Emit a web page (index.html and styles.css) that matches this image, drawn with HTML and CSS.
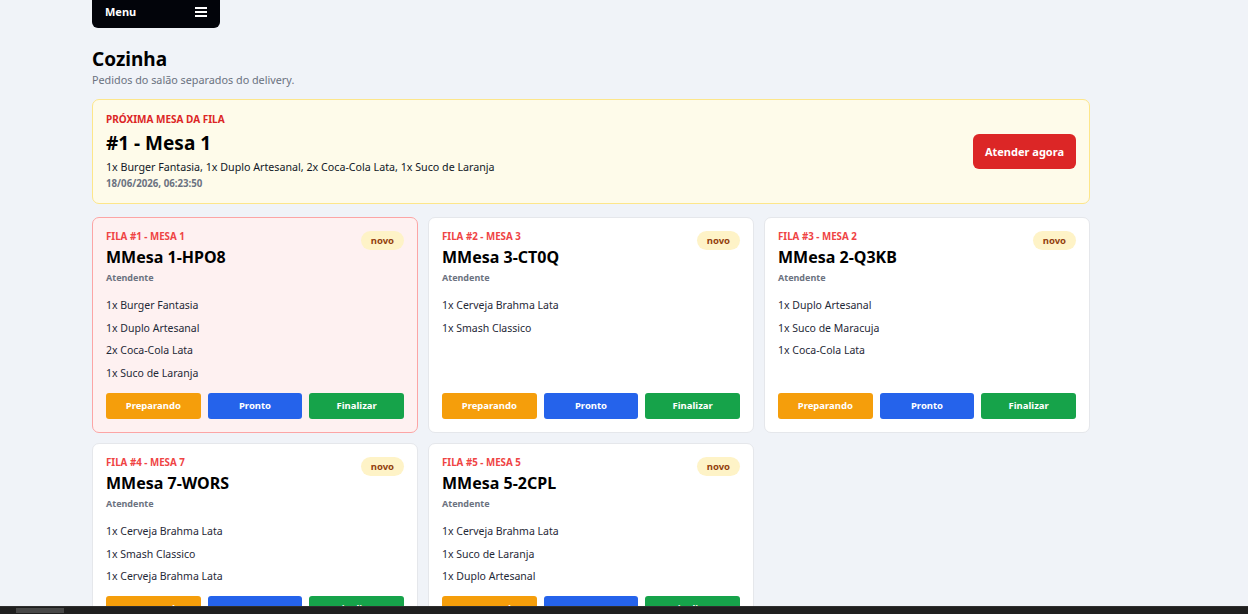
FILE: index.html
```html
<!DOCTYPE html>
<html lang="pt-BR">
	<head>
		<meta charset="UTF-8" />
		<meta name="viewport" content="width=device-width, initial-scale=1.0" />
		<title>Cozinha</title>
		<link rel="stylesheet" href="styles.css">
	</head>
	<body>
		<main class="page">
			<div class="menu-bar">
				<span>Menu</span>
				<svg class="menu-icon" viewBox="0 0 12 12" fill="currentColor">
					<rect x="0" y="1" width="12" height="2"></rect>
					<rect x="0" y="5" width="12" height="2"></rect>
					<rect x="0" y="9" width="12" height="2"></rect>
				</svg>
			</div>

			<h1>Cozinha</h1>
			<p class="subtitle">Pedidos do salão separados do delivery.</p>

			<section class="next-box">
				<div class="next-info">
					<div class="next-label">PRÓXIMA MESA DA FILA</div>
					<h2>#1 - Mesa 1</h2>
					<div class="next-items">1x Burger Fantasia, 1x Duplo Artesanal, 2x Coca-Cola Lata, 1x Suco de Laranja</div>
					<div class="next-date">18/06/2026, 06:23:50</div>
				</div>
				<button class="btn-attend">Atender agora</button>
			</section>

			<section class="orders">
				<div class="order-card first">
					<div class="card-top">
						<div>
							<div class="queue-label">FILA #1 - MESA 1</div>
							<h3>MMesa 1-HPO8</h3>
						</div>
						<span class="badge">novo</span>
					</div>
					<div class="waiter">Atendente</div>
					<ul class="items">
						<li>1x Burger Fantasia</li>
						<li>1x Duplo Artesanal</li>
						<li>2x Coca-Cola Lata</li>
						<li>1x Suco de Laranja</li>
					</ul>
					<div class="actions">
						<button class="btn-prep">Preparando</button>
						<button class="btn-ready">Pronto</button>
						<button class="btn-done">Finalizar</button>
					</div>
				</div>

				<div class="order-card">
					<div class="card-top">
						<div>
							<div class="queue-label">FILA #2 - MESA 3</div>
							<h3>MMesa 3-CT0Q</h3>
						</div>
						<span class="badge">novo</span>
					</div>
					<div class="waiter">Atendente</div>
					<ul class="items">
						<li>1x Cerveja Brahma Lata</li>
						<li>1x Smash Classico</li>
					</ul>
					<div class="actions">
						<button class="btn-prep">Preparando</button>
						<button class="btn-ready">Pronto</button>
						<button class="btn-done">Finalizar</button>
					</div>
				</div>

				<div class="order-card">
					<div class="card-top">
						<div>
							<div class="queue-label">FILA #3 - MESA 2</div>
							<h3>MMesa 2-Q3KB</h3>
						</div>
						<span class="badge">novo</span>
					</div>
					<div class="waiter">Atendente</div>
					<ul class="items">
						<li>1x Duplo Artesanal</li>
						<li>1x Suco de Maracuja</li>
						<li>1x Coca-Cola Lata</li>
					</ul>
					<div class="actions">
						<button class="btn-prep">Preparando</button>
						<button class="btn-ready">Pronto</button>
						<button class="btn-done">Finalizar</button>
					</div>
				</div>

				<div class="order-card">
					<div class="card-top">
						<div>
							<div class="queue-label">FILA #4 - MESA 7</div>
							<h3>MMesa 7-WORS</h3>
						</div>
						<span class="badge">novo</span>
					</div>
					<div class="waiter">Atendente</div>
					<ul class="items">
						<li>1x Cerveja Brahma Lata</li>
						<li>1x Smash Classico</li>
						<li>1x Cerveja Brahma Lata</li>
					</ul>
					<div class="actions">
						<button class="btn-prep">Preparando</button>
						<button class="btn-ready">Pronto</button>
						<button class="btn-done">Finalizar</button>
					</div>
				</div>

				<div class="order-card">
					<div class="card-top">
						<div>
							<div class="queue-label">FILA #5 - MESA 5</div>
							<h3>MMesa 5-2CPL</h3>
						</div>
						<span class="badge">novo</span>
					</div>
					<div class="waiter">Atendente</div>
					<ul class="items">
						<li>1x Cerveja Brahma Lata</li>
						<li>1x Suco de Laranja</li>
						<li>1x Duplo Artesanal</li>
					</ul>
					<div class="actions">
						<button class="btn-prep">Preparando</button>
						<button class="btn-ready">Pronto</button>
						<button class="btn-done">Finalizar</button>
					</div>
				</div>
			</section>
		</main>
		<div class="scrollbar"><div class="scroll-thumb"></div></div>
	</body>
</html>
```

FILE: styles.css
```css
:root {
	--bg-color: #f0f3f8;
	--text-color: #111827;
	--muted: #6b7280;
	--red: #dc2626;
	--label-red: #ef4444;
	--border: #e5e7eb;
}
body {
	font-family: 'Noto Sans', sans-serif;
	margin: 0;
	background-color: var(--bg-color);
	color: var(--text-color);
	overflow: hidden;
	height: 614px;
}
.page {
	width: 998px;
	margin-left: 92px;
}
.menu-bar {
	display: flex;
	justify-content: space-between;
	align-items: center;
	width: 128px;
	height: 28px;
	box-sizing: border-box;
	padding: 0 13px 5px 13px;
	background-color: #02040a;
	color: #fff;
	border-radius: 0 0 6px 6px;
	font-size: 11px;
	font-weight: 700;
}
.menu-icon {
	width: 12px;
	height: 12px;
}
h1 {
	margin: 20px 0 0;
	font-size: 19px;
	line-height: 22px;
	font-weight: 700;
	color: #000;
}
.subtitle {
	margin: 2px 0 0;
	font-size: 10.8px;
	color: var(--muted);
}
.next-box {
	display: flex;
	align-items: center;
	justify-content: space-between;
	margin-top: 12px;
	padding: 12px 13px 13px;
	background-color: #fefbea;
	border: 1px solid #fde68a;
	border-radius: 7px;
}
.next-label {
	font-size: 10px;
	font-weight: 700;
	color: var(--red);
}
h2 {
	margin: 5px 0 3px;
	font-size: 19px;
	line-height: 24px;
	color: #000;
}
.next-items {
	font-size: 10.7px;
	line-height: 19px;
}
.next-date {
	font-size: 9.7px;
	font-weight: 700;
	color: var(--muted);
}
.btn-attend {
	background-color: var(--red);
	color: #fff;
	border: none;
	border-radius: 6px;
	padding: 0 12px;
	height: 35px;
	font-family: inherit;
	font-size: 11px;
	font-weight: 700;
	cursor: pointer;
}
.orders {
	display: grid;
	grid-template-columns: repeat(3, 1fr);
	gap: 10px;
	margin-top: 13px;
}
.order-card {
	display: flex;
	flex-direction: column;
	padding: 12px 13px 13px;
	background-color: #fff;
	border: 1px solid var(--border);
	border-radius: 7px;
}
.order-card.first {
	background-color: #fef1f1;
	border-color: #fca5a5;
}
.card-top {
	display: flex;
	justify-content: space-between;
	align-items: flex-start;
}
.queue-label {
	font-size: 9.75px;
	font-weight: 700;
	color: var(--label-red);
}
h3 {
	margin: 3px 0 0;
	font-size: 16px;
	line-height: 22px;
	color: #000;
}
.badge {
	margin-top: 1px;
	padding: 2px 10px;
	background-color: #fef3c7;
	color: #92400e;
	border-radius: 999px;
	font-size: 9.5px;
	font-weight: 700;
	line-height: 15px;
}
.waiter {
	margin-top: 3px;
	font-size: 9px;
	font-weight: 700;
	color: var(--muted);
}
.items {
	list-style: none;
	margin: 10px 0 0;
	padding: 0;
	font-size: 10.5px;
	color: #1f2937;
}
.items li {
	line-height: 22.7px;
}
.actions {
	display: grid;
	grid-template-columns: repeat(3, 1fr);
	gap: 7px;
	margin-top: auto;
	padding-top: 8px;
}
.actions button {
	height: 26px;
	border: none;
	border-radius: 3px;
	color: #fff;
	font-family: inherit;
	font-size: 9.5px;
	font-weight: 700;
	cursor: pointer;
}
.btn-prep {
	background-color: #f59e0b;
}
.btn-ready {
	background-color: #2563eb;
}
.btn-done {
	background-color: #16a34a;
}
.scrollbar {
	position: fixed;
	left: 0;
	right: 0;
	bottom: 0;
	height: 7px;
	background-color: #1f1f1f;
	border-top: 1px solid #2e2e2e;
}
.scroll-thumb {
	width: 48px;
	height: 5px;
	margin: 1px 0 0 16px;
	background-color: #474747;
}
```
